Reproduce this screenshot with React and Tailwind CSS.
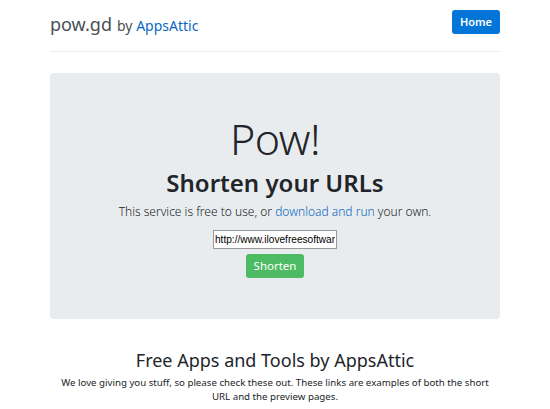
export default function App() {
  return (
    <div className="min-h-screen bg-white font-['Segoe_UI','Noto_Sans',sans-serif] text-[#212529]">
      <div className="mx-auto w-[450px]">
        {/* header */}
        <header className="flex h-[52px] items-start justify-between border-b border-[#eeeeee]">
          <div className="mt-[15px] flex items-baseline gap-[5px] leading-none">
            <span className="text-[18px] text-[#495057]">pow.gd</span>
            <span className="text-[14px] text-[#495057]">
              by <a className="text-[#0b67c2]">AppsAttic</a>
            </span>
          </div>
          <button className="mt-[10px] h-[24px] w-[48px] rounded-[3px] bg-[#0275d8] text-[11px] font-semibold text-white">
            Home
          </button>
        </header>

        {/* jumbotron */}
        <section className="mt-[21px] flex h-[246px] flex-col items-center rounded-[4px] bg-[#e9ecef] pt-[44px]">
          <h1 className="text-[43px] font-light leading-none tracking-[-0.5px]">Pow!</h1>
          <h2 className="mt-[11px] text-[24px] font-semibold leading-none">Shorten your URLs</h2>
          <p className="mt-[11px] text-[12px] font-light leading-none">
            This service is free to use, or <a className="text-[#0b67c2]">download and run</a> your own.
          </p>
          <input
            readOnly
            value="http://www.ilovefreesoftware.com"
            className="mt-[12px] h-[19px] w-[124px] border border-[#999] bg-white px-[1px] font-['Liberation_Sans',sans-serif] text-[10.1px] text-black outline-none"
          />
          <button className="mt-[5px] h-[24px] w-[58px] rounded-[3px] bg-[#4cbb63] text-[11.5px] text-white">
            Shorten
          </button>
        </section>

        {/* apps */}
        <section className="mt-[32px] text-center">
          <h3 className="text-[18px] leading-none">Free Apps and Tools by AppsAttic</h3>
          <p className="mt-[7px] px-[6px] text-[9.7px] leading-[14px]">
            We love giving you stuff, so please check these out. These links are examples of both the short
            URL and the preview pages.
          </p>
        </section>
      </div>
    </div>
  );
}
